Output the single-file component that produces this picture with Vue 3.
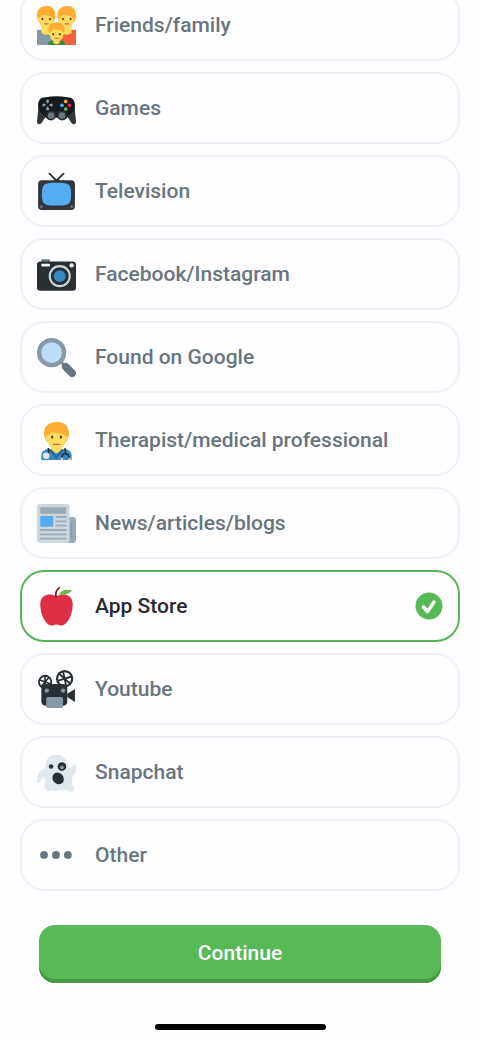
<template>
  <form class="survey" @submit.prevent="handleSubmit">
    <div ref="list" class="options" role="radiogroup" aria-label="How did you hear about us?">
      <label
          v-for="option in options"
          :key="option.id"
          class="option"
          :class="{ selected: selected === option.id }"
      >
        <svg class="option-icon" viewBox="0 0 36 36" aria-hidden="true">
          <template v-if="option.id === 'family'">
            <path fill="#8899a6" d="M0 22h16v14H0z" />
            <path fill="#f4623a" d="M20 22h16v14H20z" />
            <path fill="#ffdc5d" d="M4 17h9v8q-4.500 3-9 0zM23 17h9v8q-4.500 3-9 0z" />
            <path fill="#ffac33" d="M8.500 0C12-.5 17 2 17 8c0 3-.5 5-2 7H2C.5 13 0 11 0 8c0-5 4-8 8.500-8z" />
            <path fill="#ffac33" d="M27.500 0C31-.5 36 2 36 8c0 3-.5 5-2 7H21c-1.500-2-2-4-2-7 0-5 4-8 8.500-8z" />
            <path fill="#ffdc5d" d="M1.500 11c2.500-1 2.500-3 4.500-3 3 1.500 6 0 8 3 1.500 0 1.500 3 .3 3.200C14 18 12 20.500 8.500 20.500S2.500 18 2 14.500c-1.200-.3-1.500-2.500-.5-3.500z" />
            <path fill="#ffdc5d" d="M20.500 11c2.500-1 2.500-3 4.500-3 3 1.500 6 0 8 3 1.500 0 1.500 3 .3 3.200C33 18 31 20.500 27.500 20.500S21.500 18 21 14.500c-1.200-.3-1.500-2.500-.5-3.500z" />
            <g fill="#662113">
              <ellipse cx="5" cy="12" rx=".8" ry="1.200" />
              <ellipse cx="12" cy="12" rx=".8" ry="1.200" />
              <ellipse cx="24" cy="12" rx=".8" ry="1.200" />
              <ellipse cx="31" cy="12" rx=".8" ry="1.200" />
            </g>
            <path fill="none" stroke="#c1694f" d="M6.500 16.500h4M25.500 16.500h4" />
            <path fill="#3e8a3c" d="M10 36c0-3 2-4 4-4h8c2 0 4 1 4 4z" />
            <path fill="#ffdc5d" d="M15 30h6v4q-3 2.500-6 0z" />
            <path fill="#ffac33" d="M18 15c4-.5 7.500 2 7.500 7 0 3-1 4-2 6h-11c-1-2-2-3-2-6 0-4.500 3.500-7 7.500-7z" />
            <path fill="#ffdc5d" d="M12 24c2-.5 2.500-2.500 4-2.500 3 1 6 0 8 2.500 1.500 0 1 3 .2 3-.4 3.500-2.700 5.500-6.200 5.500s-5.800-2-6.200-5.500c-1-.2-1-3 .2-3z" />
            <ellipse cx="15" cy="26" rx=".8" ry="1.100" fill="#662113" />
            <ellipse cx="21" cy="26" rx=".8" ry="1.100" fill="#662113" />
            <path fill="none" stroke="#c1694f" d="M16 29.800h4" />
          </template>

          <template v-else-if="option.id === 'games'">
            <path fill="#31373d" d="M1.500 15L0 29.500C-.3 33 3 33.500 4.500 31l4-6h19l4 6c1.500 2.500 4.800 2 4.500-1.500L34.500 15z" />
            <path fill="#161a1e" d="M8 7.500q10-1.500 20 0c5 0 7 3 7 7.500 0 5-3 8-6 9.500-2 5-7 5-9 2h-4c-2 3-7 3-9-2-3-1.500-6-4.500-6-9.500 0-4.500 2-7.500 7-7.500z" />
            <circle cx="13" cy="24.500" r="4.500" fill="#292f33" />
            <circle cx="23" cy="24.500" r="4.500" fill="#292f33" />
            <circle cx="13" cy="24.500" r="3" fill="#66757f" />
            <circle cx="23" cy="24.500" r="3" fill="#66757f" />
            <path fill="#8899a6" d="M8.500 10h2.500v2l-1.250 1.500L8.500 12zM8.500 19.500h2.500v-2L9.750 16 8.500 17.500zM5 13.500h2l1.500 1.250L7 16H5zM14.500 13.500h-2L11 14.750 12.500 16h2z" />
            <circle cx="26.500" cy="11.500" r="1.700" fill="#ffac33" />
            <circle cx="30" cy="15" r="1.700" fill="#dd2e44" />
            <circle cx="26.500" cy="18.500" r="1.700" fill="#77b255" />
            <circle cx="23" cy="15" r="1.700" fill="#55acee" />
          </template>

          <template v-else-if="option.id === 'tv'">
            <path fill="none" stroke="#292f33" stroke-width="1.700" stroke-linecap="round" d="M11.500 1.500L18 8l6.500-6.500" />
            <path fill="#292f33" d="M14 8q4-3 8 0z" />
            <rect x="1" y="7.500" width="34" height="27.500" rx="3.500" fill="#31373d" />
            <path fill="#55acee" d="M18 10c6 0 9.500.5 11.500 2 1.500 1.500 2 4 2 8.500s-.5 7-2 8.500c-2 1.500-5.500 2-11.500 2s-9.500-.5-11.500-2c-1.500-1.500-2-4-2-8.500s.5-7 2-8.500c2-1.500 5.500-2 11.500-2z" />
            <circle cx="4" cy="32" r="1.300" fill="#66757f" />
            <circle cx="32" cy="32" r="1.300" fill="#66757f" />
          </template>

          <template v-else-if="option.id === 'social'">
            <rect x="4" y="4" width="8" height="5" rx="1" fill="#66757f" />
            <rect y="6" width="36" height="27" rx="3" fill="#292f33" />
            <rect x="4" y="8" width="8" height="2.500" rx=".8" fill="#fff" />
            <circle cx="32" cy="9.500" r="2" fill="#f5f8fa" />
            <circle cx="21" cy="19.500" r="10.200" fill="#ccd6dd" />
            <circle cx="21" cy="19.500" r="8.200" fill="#292f33" />
            <circle cx="21" cy="19.500" r="5.500" fill="#3b88c3" />
          </template>

          <template v-else-if="option.id === 'google'">
            <path stroke="#8899a6" stroke-width="3" d="M22 22l4 4" />
            <path stroke="#66757f" stroke-width="7" stroke-linecap="round" d="M26.500 26.500l6 6" />
            <circle cx="13.500" cy="13.500" r="11.500" fill="#bbddf5" stroke="#8899a6" stroke-width="4" />
          </template>

          <template v-else-if="option.id === 'medical'">
            <path fill="#3b88c3" d="M4 36v-4c0-4 3-6 6-6h16c3 0 6 2 6 6v4z" />
            <path fill="#226699" d="M13 25.500l5 7 5-7 1.500 2L18 35l-6.500-7.500z" />
            <path fill="#ffdc5d" d="M13.500 21h9v5q-4.500 7-9 0z" />
            <path fill="#ffac33" d="M18 1c7-1 11.500 4 11.500 10 0 3.500-1 6-3 8.500H9.500c-2-2.500-3-5-3-8.500C6.500 5 11 1 18 1z" />
            <path fill="#ffdc5d" d="M9 14c2.500-1 3-4 5-4 4 2.500 10 .5 12.500 4 2 .3 2 4-.1 4.300C26 23 22.500 25.500 18 25.500S10 23 9.600 18.300C7.500 18 7.500 14.500 9 14z" />
            <ellipse cx="14" cy="14.800" rx="1" ry="1.500" fill="#662113" />
            <ellipse cx="22" cy="14.800" rx="1" ry="1.500" fill="#662113" />
            <path fill="none" stroke="#c1694f" stroke-width="1.200" stroke-linecap="round" d="M15 21.500h6" />
            <path fill="none" stroke="#292f33" stroke-width="1.600" d="M10.500 25q1 4-1 7M25.500 25q1.500 2 .5 5M23 35c-1-6 6-7 7 0" />
            <circle cx="8.500" cy="32" r="3" fill="#e1e8ed" />
            <path fill="#ccd6dd" d="M22 34h2v2h-2zM29 34h2v2h-2z" />
          </template>

          <template v-else-if="option.id === 'news'">
            <rect x="27" y="12" width="9" height="24" rx="3" fill="#99aab5" />
            <path fill="#8899a6" d="M31 17h1v15h-1z" />
            <rect width="30" height="36" rx="3" fill="#ccd6dd" />
            <rect x="3" y="3" width="24" height="6" rx="1" fill="#99aab5" />
            <rect x="3" y="11" width="12" height="10" rx="1" fill="#55acee" />
            <path stroke="#99aab5" stroke-width="1.700" stroke-linecap="round" d="M18 12h8.500M18 16h8.500M18 20h8.500M3.500 24h23M3.500 28h23M3.500 32h23" />
          </template>

          <template v-else-if="option.id === 'appstore'">
            <path fill="#dd2e44" d="M24 7c-3 0-3 1-6 1s-3-1-6-1c-4 0-9 2-9 9 0 11 6 19.500 10 19.500 3 0 3-1 5-1s2 1 5 1c4 0 10-8.500 10-19.500 0-7-5-9-9-9z" />
            <path fill="#77b255" d="M20 7c3-5 8-5 12.500-4C29 7 25 8 20 7z" />
            <path fill="none" stroke="#662113" stroke-width="1.600" stroke-linecap="round" d="M17.500 9C17 5 18 2.500 20.500.8" />
          </template>

          <template v-else-if="option.id === 'youtube'">
            <g fill="none" stroke="#292f33">
              <circle cx="7.500" cy="11" r="5.700" stroke-width="1.700" />
              <path stroke-width="1.500" d="M7.500 5v12M2 9l11 4M11 7l-7 8" />
              <circle cx="25.500" cy="8" r="7" stroke-width="2" />
              <path stroke-width="1.700" d="M24 1l3 14M19 10l13-4M20 3l11 10" />
            </g>
            <rect x="4" y="13" width="24" height="20" rx="4" fill="#292f33" />
            <path fill="#292f33" d="M28 22l7-4.500v12L28 25z" />
            <circle cx="9" cy="19" r="2" fill="#8899a6" />
            <circle cx="24" cy="19" r="2" fill="#8899a6" />
            <rect x="8.500" y="25" width="15.500" height="10" rx="1.500" fill="#8899a6" />
          </template>

          <template v-else-if="option.id === 'snapchat'">
            <path fill="#e1e8ed" d="M18 1.500C11 1.500 7.500 6 7.500 14 2 16 .5 20 0 25c0 3 2 4 3 1 .5-2 2-3 4-3 1 3-.5 6 .5 9 1 4 4 4 6 2 3 2 6 0 8 0 3 2 5 0 6 0 3 3 6 2 6.500 0 .5-3-2-4-2-8 0-2 1-3 1-5 3-2 3.500-7 3-10-2-2-2-1-3 1-1 2-2 2-4 2C29 6 24 1.500 18 1.500z" />
            <circle cx="13" cy="12.500" r="2.100" fill="#292f33" />
            <circle cx="23" cy="12.500" r="4" fill="#292f33" />
            <circle cx="23" cy="13.300" r="1.700" fill="#8899a6" />
            <ellipse cx="19.500" cy="23.500" rx="5" ry="5.700" fill="#292f33" transform="rotate(-38 19.500 23.500)" />
          </template>

          <g v-else fill="#66757f">
            <circle cx="6.500" cy="17.500" r="3.600" />
            <circle cx="17.500" cy="17.500" r="3.600" />
            <circle cx="28.500" cy="17.500" r="3.600" />
          </g>
        </svg>

        <span class="option-label">{{ option.label }}</span>

        <span class="option-mark">
          <input v-model="selected" type="radio" name="source" :value="option.id" class="option-radio">
          <svg v-if="selected === option.id" class="option-check" viewBox="0 0 28 28" aria-hidden="true">
            <circle cx="14" cy="14" r="13.500" fill="#58b957" />
            <path d="M8.500 15l4 4.500 6.500-9.500" fill="none" stroke="#fff" stroke-width="3.500" stroke-linecap="round" stroke-linejoin="round" />
          </svg>
        </span>
      </label>
    </div>

    <div class="footer">
      <button type="submit" class="continue-btn">Continue</button>
      <div class="home-indicator"></div>
    </div>
  </form>
</template>

<script setup>
import { ref, onMounted } from 'vue'

const emit = defineEmits(['continue'])

const options = [
  { id: 'family', label: 'Friends/family' },
  { id: 'games', label: 'Games' },
  { id: 'tv', label: 'Television' },
  { id: 'social', label: 'Facebook/Instagram' },
  { id: 'google', label: 'Found on Google' },
  { id: 'medical', label: 'Therapist/medical professional' },
  { id: 'news', label: 'News/articles/blogs' },
  { id: 'appstore', label: 'App Store' },
  { id: 'youtube', label: 'Youtube' },
  { id: 'snapchat', label: 'Snapchat' },
  { id: 'other', label: 'Other' }
]

const selected = ref('appstore')
const list = ref(null)

// the list opens scrolled to its end
onMounted(() => {
  list.value.scrollTop = list.value.scrollHeight
})

const handleSubmit = () => {
  emit('continue', selected.value)
}
</script>

<style>
body {
  background: #fefdff;
}
</style>

<style scoped>
.survey {
  display: flex;
  flex-direction: column;
  height: 100vh;
  background: #fefdff;
  font-family: Roboto, "Liberation Sans", sans-serif;
  font-size: 21px;
  font-weight: 500;
  line-height: 24px;
}
.options {
  flex: 1;
  min-height: 0;
  display: flex;
  flex-direction: column;
  gap: 11px;
  padding: 0 20px;
  overflow-y: auto;
  scrollbar-width: none;
}
.option {
  flex-shrink: 0;
  display: flex;
  align-items: center;
  gap: 19px;
  box-sizing: border-box;
  min-height: 72px;
  padding: 0 15px;
  border: 2px solid #f2f0f7;
  border-radius: 24px;
  color: #69757e;
  cursor: pointer;
}
.option.selected {
  border-color: #5bb25b;
  color: #29292f;
}
.option-icon {
  width: 39px;
  height: 39px;
  flex-shrink: 0;
}
.option-label {
  flex: 1;
}
.option-mark {
  display: grid;
  width: 28px;
  height: 28px;
}
.option-radio,
.option-check {
  grid-area: 1 / 1;
  width: 28px;
  height: 28px;
  margin: 0;
}
.option-radio {
  appearance: none;
  border-radius: 50%;
}
.footer {
  display: flex;
  flex-direction: column;
  align-items: center;
  gap: 41px;
  padding: 34px 39px 10px;
}
.continue-btn {
  width: 100%;
  height: 58px;
  padding: 0 0 3px;
  border: none;
  border-radius: 16px;
  background: #58b957;
  box-shadow: inset 0 -4px 0 #469a45;
  color: #fff;
  font: inherit;
  cursor: pointer;
}
.home-indicator {
  width: 171px;
  height: 6px;
  border-radius: 3px;
  background: #000;
}
</style>
